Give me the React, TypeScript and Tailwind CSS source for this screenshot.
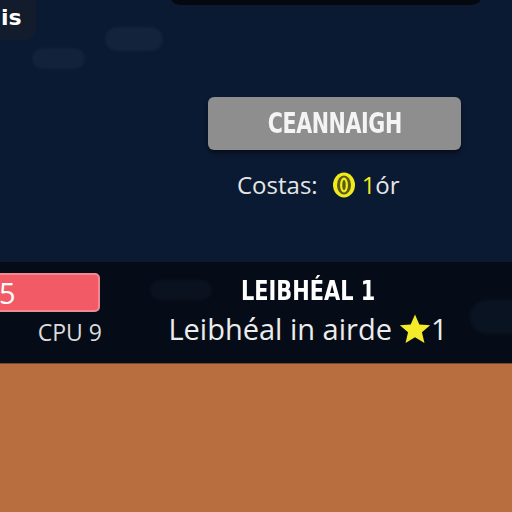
import React from "react";

function Coin() {
  return (
    <svg width="24" height="26" viewBox="0 0 24 26" className="shrink-0">
      <ellipse cx="12" cy="13" rx="11" ry="12.5" fill="#f0ec1c" />
      <ellipse cx="12" cy="13" rx="7" ry="9.5" fill="#5c5a18" />
      <ellipse cx="12" cy="13" rx="4" ry="7.5" fill="#f0ec1c" />
      <ellipse cx="12" cy="13" rx="1.7" ry="5" fill="#5c5a18" />
    </svg>
  );
}

function Star() {
  return (
    <svg width="34" height="32" viewBox="0 0 24 23" className="shrink-0">
      <path
        d="M12 1l3.1 7.2 7.8.6-5.9 5.1 1.8 7.6L12 17.4l-6.8 4.1 1.8-7.6-5.9-5.1 7.8-.6z"
        fill="#f4ea2a"
      />
    </svg>
  );
}

export default function App() {
  return (
    <div className="w-[512px] h-[512px] flex flex-col overflow-hidden font-['Open_Sans',sans-serif]">
      {/* Shop area */}
      <div className="relative h-[262px] bg-[#0b1a33]">
        {/* decorative blobs */}
        <div className="absolute left-[105px] top-[27px] w-[58px] h-[24px] rounded-full bg-[#13233b] blur-[1px]" />
        <div className="absolute left-[32px] top-[48px] w-[53px] h-[21px] rounded-full bg-[#12223a] blur-[1px]" />

        {/* previous card edge */}
        <div className="absolute left-[-30px] top-[-12px] w-[66px] h-[52px] rounded-[10px] bg-[#131c2c]">
          <span className="absolute left-[31px] top-[17px] text-white font-bold text-[22px] leading-[26px] font-['DejaVu_Sans',sans-serif]">
            is
          </span>
        </div>
        <div className="absolute left-[170px] top-[-20px] w-[312px] h-[25px] rounded-[10px] bg-[#05080f]" />

        <div className="pt-[97px] pl-[208px] flex flex-col">
          <button className="w-[253px] h-[53px] rounded-[6px] bg-[#8e8e8e] shadow-[0_3px_4px_rgba(0,0,0,0.5)] flex items-center justify-center">
            <span className="text-[#f4f4f4] font-bold text-[28px] tracking-[-0.5px] scale-x-[0.82] font-['DejaVu_Sans_Condensed','DejaVu_Sans',sans-serif]">
              CEANNAIGH
            </span>
          </button>
          <div className="mt-[20px] ml-[29px] flex items-center gap-[14px] text-[24px] leading-[30px] text-[#e6e6e6]">
            <span>Costas:</span>
            <span className="flex items-center gap-[6px]">
              <Coin />
              <span className="flex">
                <span className="text-[#f0ec1c]">1</span>
                <span>ór</span>
              </span>
            </span>
          </div>
        </div>
      </div>

      {/* Level bar */}
      <div className="relative h-[101px] bg-[#060c17] flex">
        <div className="absolute left-[470px] top-[38px] w-[100px] h-[34px] rounded-full bg-[#0a1321] blur-[1px]" />
        <div className="absolute left-[150px] top-[18px] w-[62px] h-[20px] rounded-full bg-[#0a1220] blur-[1px]" />

        <div className="w-[104px] pt-[11px] flex flex-col items-end">
          <div className="w-[104px] h-[39px] -ml-[4px] self-start rounded-r-[5px] bg-[#f25b66] border-2 border-[#f08a92] flex items-center">
            <span className="ml-[1px] text-white text-[29px] leading-[30px]">5</span>
          </div>
          <span className="mt-[5px] pr-[2px] text-[#dcdcdc] text-[23px] leading-[30px]">CPU 9</span>
        </div>

        <div className="flex-1 flex flex-col items-center pt-[13px]">
          <span className="text-white font-bold text-[27px] leading-[32px] scale-x-[0.86] font-['DejaVu_Sans_Condensed','DejaVu_Sans',sans-serif]">
            LEIBHÉAL 1
          </span>
          <div className="mt-[3px] flex items-center text-[#ececec] text-[29px] leading-[38px]">
            <span>Leibhéal in airde</span>
            <span className="ml-[6px]"><Star /></span>
            <span className="-ml-[1px]">1</span>
          </div>
        </div>
      </div>

      <div className="h-[1px] bg-[#6b4a36]" />
      <div className="flex-1 bg-[#b96e40]" />
    </div>
  );
}
